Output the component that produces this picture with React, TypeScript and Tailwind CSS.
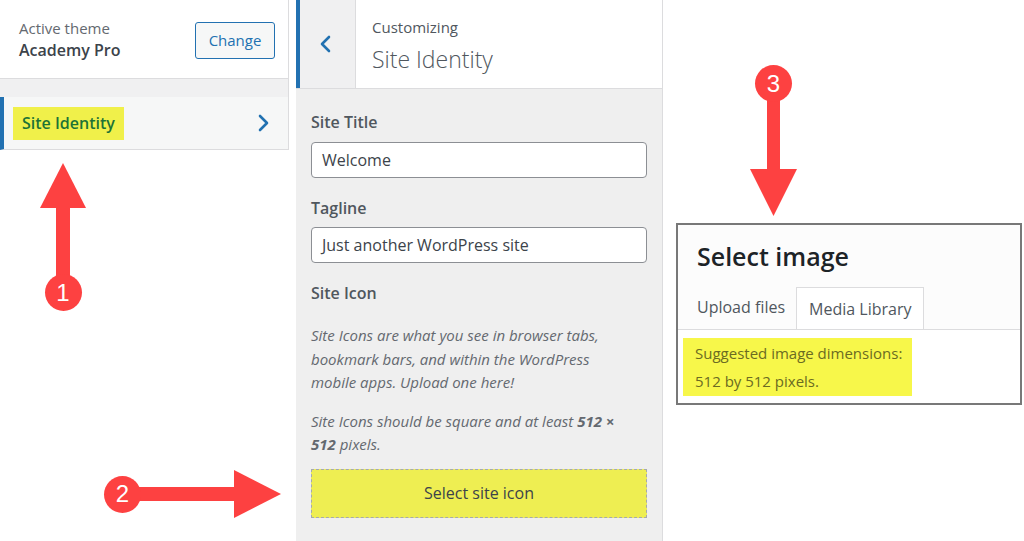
import React from 'react';

// ─── Annotation pieces ────────────────────────────────────────────────────────

const RED = '#fd4141';

function Badge({ n }: { n: number }) {
  return (
    <span className="relative z-10 flex h-[37px] w-[37px] items-center justify-center rounded-full bg-[#fd4141] text-[24px] leading-none text-white [font-family:'Liberation_Sans',Arial,sans-serif]">
      {n}
    </span>
  );
}

function Chevron({ dir, className }: { dir: 'left' | 'right'; className?: string }) {
  return (
    <svg width="12" height="18" viewBox="0 0 12 18" className={className}>
      <path
        d={dir === 'right' ? 'M3 2l7 7-7 7' : 'M9 2L2 9l7 7'}
        fill="none"
        stroke="#2271b1"
        strokeWidth="2.6"
        strokeLinecap="round"
        strokeLinejoin="round"
      />
    </svg>
  );
}

// ─── Panels ───────────────────────────────────────────────────────────────────

function ThemePanel() {
  return (
    <div className="relative w-[289px] shrink-0">
      <div className="flex h-[79px] items-center justify-between border-r border-b border-[#dcdcde] bg-white pl-[19px] pr-[13px]">
        <div className="flex flex-col">
          <span className="text-[15px] leading-[21px] text-[#646970]">Active theme</span>
          <span className="text-[16px] font-semibold leading-[22px] text-[#3c434a]">Academy Pro</span>
        </div>
        <button className="mt-[3px] h-[37px] w-[80px] rounded-[3px] border border-[#2271b1] bg-[#f6f7f7] text-[15px] text-[#2271b1]">
          Change
        </button>
      </div>
      <div className="h-[18px] border-r border-[#dcdcde] bg-[#f0f0f1]" />
      <div className="flex h-[53px] items-center justify-between border-r border-b border-[#dcdcde] border-l-4 border-l-[#2271b1] bg-[#f6f7f7] pl-[9px] pr-[19px]">
        <span className="flex h-[33px] items-center bg-[#f0f04a] px-[9px] text-[16px] font-semibold text-[#1d7336]">
          Site Identity
        </span>
        <Chevron dir="right" />
      </div>

      {/* arrow 1 */}
      <div className="absolute left-[40px] top-[163px] flex w-[46px] flex-col items-center">
        <svg width="46" height="118" viewBox="0 0 46 118">
          <polygon points="23,0 46,45 0,45" fill={RED} />
          <rect x="16" y="44" width="14" height="74" fill={RED} />
        </svg>
        <div className="-mt-[7px]">
          <Badge n={1} />
        </div>
      </div>
    </div>
  );
}

function CustomizerPanel() {
  return (
    <div className="ml-[7px] flex h-[541px] w-[367px] shrink-0 flex-col border-r border-[#dcdcde] bg-[#efefef]">
      <div className="flex h-[89px] border-b border-[#dcdcde]">
        <div className="flex w-[59px] items-center justify-center border-l-4 border-[#2271b1] bg-[#f0f0f1] pr-[3px]">
          <Chevron dir="left" />
        </div>
        <div className="flex flex-1 flex-col border-l border-[#dcdcde] bg-white pl-[16px] pt-[16px]">
          <span className="text-[15px] leading-[22px] text-[#50575e]">Customizing</span>
          <span className="mt-[6px] text-[23px] font-light leading-[30px] text-[#50575e]">Site Identity</span>
        </div>
      </div>

      <div className="flex flex-col px-[15px] pt-[21px]">
        <label className="text-[16px] font-semibold leading-[24px] text-[#50575e]">Site Title</label>
        <div className="mt-[8px] flex h-[36px] items-center rounded-[4px] border border-[#8c8f94] bg-white px-[10px] text-[16px] text-[#3c434a]">
          Welcome
        </div>

        <label className="mt-[18px] text-[16px] font-semibold leading-[24px] text-[#50575e]">Tagline</label>
        <div className="mt-[7px] flex h-[36px] items-center rounded-[4px] border border-[#8c8f94] bg-white px-[10px] text-[16px] text-[#3c434a]">
          Just another WordPress site
        </div>

        <label className="mt-[18px] text-[16px] font-semibold leading-[24px] text-[#50575e]">Site Icon</label>
        <p className="mt-[19px] pr-[40px] text-[15px] italic leading-[23.5px] text-[#646970]">
          Site Icons are what you see in browser tabs, bookmark bars, and within the WordPress mobile apps. Upload one here!
        </p>
        <p className="mt-[15px] pr-[24px] text-[15px] italic leading-[23.5px] text-[#646970]">
          Site Icons should be square and at least <b className="font-bold">512&nbsp;×</b> <b className="font-bold">512</b> pixels.
        </p>
        <button className="mt-[12px] flex h-[49px] items-center justify-center border border-dashed border-[#a7aaad] bg-[#eeee52] text-[16px] text-[#3c434a]">
          Select site icon
        </button>
      </div>
    </div>
  );
}

function MediaDialog() {
  return (
    <div className="relative ml-[13px] flex flex-1 flex-col">
      {/* arrow 3 */}
      <div className="ml-[74px] mt-[65px] flex w-[47px] flex-col items-center">
        <Badge n={3} />
        <svg width="47" height="132" viewBox="0 0 47 132" className="-mt-[18px]">
          <rect x="17" y="0" width="13" height="86" fill={RED} />
          <polygon points="0,85 47,85 23.5,132" fill={RED} />
        </svg>
      </div>

      <div className="mt-[7px] mr-[2px] flex h-[182px] flex-col border-2 border-[#787878] bg-white">
        <div className="bg-[#fcfcfc] pl-[19px] pt-[14px]">
          <h2 className="text-[25px] font-semibold leading-[34px] text-[#1d2327]">Select image</h2>
          <div className="mt-[12px] flex items-end">
            <span className="flex h-[44px] items-center pr-[11px] text-[16px] text-[#50575e]">Upload files</span>
            <span className="-mb-px flex h-[43px] items-center border border-b-0 border-[#dcdcde] bg-white px-[12px] text-[16px] text-[#50575e]">
              Media Library
            </span>
          </div>
        </div>
        <div className="border-t border-[#dcdcde] px-[5px] pt-[8px]">
          <div className="flex w-[229px] flex-col whitespace-nowrap bg-[#f7f74a] px-[12px] py-[1px] text-[15px] leading-[28px] text-[#6b6b22]">
            <span>Suggested image dimensions:</span>
            <span>512 by 512 pixels.</span>
          </div>
        </div>
      </div>
    </div>
  );
}

// ─── Page ─────────────────────────────────────────────────────────────────────

export default function App() {
  return (
    <div className="relative flex h-[541px] w-[1024px] overflow-hidden bg-white [font-family:'Open_Sans','Noto_Sans',sans-serif]">
      <ThemePanel />
      <CustomizerPanel />
      <MediaDialog />

      {/* arrow 2 */}
      <div className="absolute left-[104px] top-[470px] flex items-center">
        <Badge n={2} />
        <svg width="145" height="48" viewBox="0 0 145 48" className="-ml-[5px]">
          <rect x="0" y="17" width="100" height="14" fill={RED} />
          <polygon points="98,0 145,24 98,48" fill={RED} />
        </svg>
      </div>
    </div>
  );
}
